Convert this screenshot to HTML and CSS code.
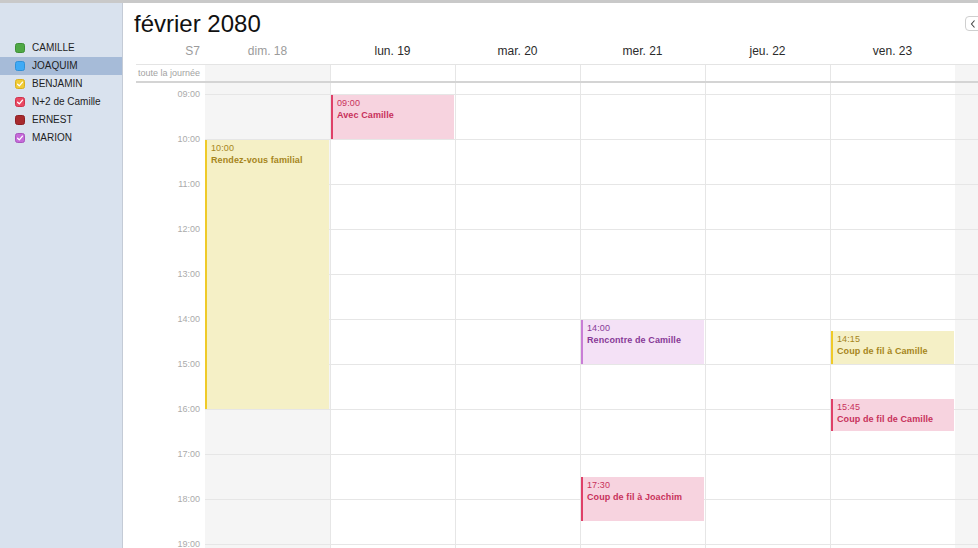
FILE: index.html
```html
<!DOCTYPE html>
<html lang="fr">
<head>
<meta charset="utf-8">
<title>Calendrier</title>
<link rel="stylesheet" href="styles.css">
</head>
<body>
<div class="topbar"></div>
<div class="app">
  <aside class="sidebar">
    <ul class="cal-list">
      <li class="cal-item">
        <svg class="box" viewBox="0 0 10 10"><rect x="0.5" y="0.5" width="9" height="9" rx="2" fill="#4fa845" stroke="#3e8f36"/></svg>
        <span>CAMILLE</span>
      </li>
      <li class="cal-item selected">
        <svg class="box" viewBox="0 0 10 10"><rect x="0.5" y="0.5" width="9" height="9" rx="2" fill="#3eaaf6" stroke="#2f91d8"/></svg>
        <span>JOAQUIM</span>
      </li>
      <li class="cal-item">
        <svg class="box" viewBox="0 0 10 10"><rect x="0.5" y="0.5" width="9" height="9" rx="2" fill="#f0cb35" stroke="#d8b020"/><path d="M2.6 5.2 L4.3 6.9 L7.5 3.1" fill="none" stroke="#fff" stroke-width="1.3" stroke-linecap="round" stroke-linejoin="round"/></svg>
        <span>BENJAMIN</span>
      </li>
      <li class="cal-item">
        <svg class="box" viewBox="0 0 10 10"><rect x="0.5" y="0.5" width="9" height="9" rx="2" fill="#ea4862" stroke="#cf334d"/><path d="M2.6 5.2 L4.3 6.9 L7.5 3.1" fill="none" stroke="#fff" stroke-width="1.3" stroke-linecap="round" stroke-linejoin="round"/></svg>
        <span>N+2 de Camille</span>
      </li>
      <li class="cal-item">
        <svg class="box" viewBox="0 0 10 10"><rect x="0.5" y="0.5" width="9" height="9" rx="2" fill="#a82a2e" stroke="#8e2024"/></svg>
        <span>ERNEST</span>
      </li>
      <li class="cal-item">
        <svg class="box" viewBox="0 0 10 10"><rect x="0.5" y="0.5" width="9" height="9" rx="2" fill="#c56ad9" stroke="#a955bd"/><path d="M2.6 5.2 L4.3 6.9 L7.5 3.1" fill="none" stroke="#fff" stroke-width="1.3" stroke-linecap="round" stroke-linejoin="round"/></svg>
        <span>MARION</span>
      </li>
    </ul>
  </aside>

  <main class="main">
    <header class="title-row">
      <h1 class="title">février 2080</h1>
      <button class="nav-btn" type="button">
        <svg viewBox="0 0 8 10" class="chev"><path d="M5.5 1.5 L2.5 5 L5.5 8.5" fill="none" stroke="#444" stroke-width="1.1"/></svg>
      </button>
    </header>

    <div class="grid-row days-head">
      <div class="gutter week">S7</div>
      <div class="day-name muted">dim. 18</div>
      <div class="day-name">lun. 19</div>
      <div class="day-name">mar. 20</div>
      <div class="day-name">mer. 21</div>
      <div class="day-name">jeu. 22</div>
      <div class="day-name">ven. 23</div>
      <div></div>
    </div>

    <div class="grid-row allday">
      <div class="gutter allday-label">toute la journée</div>
      <div class="cell weekend"></div>
      <div class="cell lined"></div>
      <div class="cell lined"></div>
      <div class="cell lined"></div>
      <div class="cell lined"></div>
      <div class="cell lined"></div>
      <div class="cell outside"></div>
    </div>

    <div class="grid-row body">
      <div class="gutter hours">
        <div class="hour">09:00</div>
        <div class="hour">10:00</div>
        <div class="hour">11:00</div>
        <div class="hour">12:00</div>
        <div class="hour">13:00</div>
        <div class="hour">14:00</div>
        <div class="hour">15:00</div>
        <div class="hour">16:00</div>
        <div class="hour">17:00</div>
        <div class="hour">18:00</div>
        <div class="hour">19:00</div>
      </div>

      <div class="col weekend">
        <div class="event yellow" style="top:57px;height:269px">
          <div class="ev-time">10:00</div>
          <div class="ev-title">Rendez-vous familial</div>
        </div>
      </div>

      <div class="col lined">
        <div class="event pink" style="top:12px;height:44px">
          <div class="ev-time">09:00</div>
          <div class="ev-title">Avec Camille</div>
        </div>
      </div>

      <div class="col lined"></div>

      <div class="col lined">
        <div class="event purple" style="top:237px;height:44px">
          <div class="ev-time">14:00</div>
          <div class="ev-title">Rencontre de Camille</div>
        </div>
        <div class="event pink" style="top:394px;height:44px">
          <div class="ev-time">17:30</div>
          <div class="ev-title">Coup de fil à Joachim</div>
        </div>
      </div>

      <div class="col lined"></div>

      <div class="col lined">
        <div class="event yellow" style="top:248px;height:33px">
          <div class="ev-time">14:15</div>
          <div class="ev-title">Coup de fil à Camille</div>
        </div>
        <div class="event pink" style="top:316px;height:32px">
          <div class="ev-time">15:45</div>
          <div class="ev-title">Coup de fil de Camille</div>
        </div>
      </div>

      <div class="col outside"></div>
    </div>
  </main>
</div>
</body>
</html>
```

FILE: styles.css
```css
* { box-sizing: border-box; }

html, body {
  margin: 0;
  padding: 0;
  width: 978px;
  height: 548px;
  overflow: hidden;
  background: #ffffff;
  font-family: "Liberation Sans", Helvetica, Arial, sans-serif;
  color: #222;
}

.topbar {
  height: 3px;
  background: #c9c9c9;
}

.app {
  display: flex;
  height: 545px;
}

/* ---------- sidebar ---------- */
.sidebar {
  width: 123px;
  flex: 0 0 123px;
  background: #d9e2ee;
  border-right: 1px solid #c4cbd6;
  padding-top: 36px;
}

.cal-list {
  list-style: none;
  margin: 0;
  padding: 0;
}

.cal-item {
  display: flex;
  align-items: center;
  gap: 7px;
  height: 18px;
  padding-left: 15px;
  font-size: 10px;
  line-height: 18px;
  color: #1e1e1e;
  white-space: nowrap;
}

.cal-item.selected {
  background: #a6bbd8;
}

.box {
  width: 10px;
  height: 10px;
  flex: 0 0 10px;
  display: block;
}

/* ---------- main ---------- */
.main {
  flex: 1;
  min-width: 0;
  display: flex;
  flex-direction: column;
  overflow: hidden;
}

.title-row {
  display: flex;
  align-items: flex-start;
  height: 35px;
  padding-left: 11px;
  margin-right: -10px;
}

.title {
  margin: 0;
  padding-top: 7px;
  font-size: 24px;
  line-height: 28px;
  font-weight: normal;
  color: #111;
}

.nav-btn {
  margin-left: auto;
  margin-top: 13px;
  width: 23px;
  height: 15px;
  padding: 0 0 0 3px;
  border: 1px solid #cfcfcf;
  border-radius: 4px;
  background: #fff;
  display: flex;
  align-items: center;
}

.chev {
  width: 8px;
  height: 10px;
  display: block;
}

.grid-row {
  display: grid;
  grid-template-columns: 69px repeat(6, 125px) 1fr;
  margin-left: 13px;
}

.gutter {
  text-align: right;
  padding-right: 5px;
  white-space: nowrap;
}

/* day names */
.days-head {
  padding: 5px 0;
  font-size: 12px;
  line-height: 16px;
}

.week { color: #9b9b9b; }

.day-name {
  text-align: center;
  color: #2b2b2b;
}

.day-name.muted { color: #9b9b9b; }

/* all-day row */
.allday {
  height: 19px;
  border-top: 1px solid #e4e4e4;
  border-bottom: 2px solid #d4d4d4;
}

.allday-label {
  font-size: 9px;
  line-height: 16px;
  color: #a3a3a3;
}

.cell.lined,
.col.lined {
  border-left: 1px solid #e6e6e6;
}

.weekend,
.outside {
  background-color: #f5f5f5;
}

/* body */
.body {
  flex: 1;
  min-height: 0;
  overflow: hidden;
}

.hours {
  padding-top: 5px;
}

.hour {
  height: 45px;
  font-size: 9px;
  line-height: 12px;
  color: #ababab;
}

.col {
  position: relative;
  background-image: linear-gradient(to bottom, #e6e6e6 0, #e6e6e6 1px, transparent 1px);
  background-size: 100% 45px;
  background-position: 0 11px;
  background-repeat: repeat;
}

.event {
  position: absolute;
  left: 0;
  right: 1px;
  padding: 2px 4px 0 4px;
  border-left: 2px solid;
  font-size: 9px;
  line-height: 12px;
  letter-spacing: 0.1px;
  overflow: hidden;
  white-space: nowrap;
}

.ev-title { font-weight: bold; }

.event.pink {
  background: #f7d3df;
  border-left-color: #df4068;
  color: #c8315b;
}

.event.yellow {
  background: #f5f0c6;
  border-left-color: #efca27;
  color: #a6851b;
}

.event.purple {
  background: #f4e1f6;
  border-left-color: #c97dd6;
  color: #873996;
}
```
